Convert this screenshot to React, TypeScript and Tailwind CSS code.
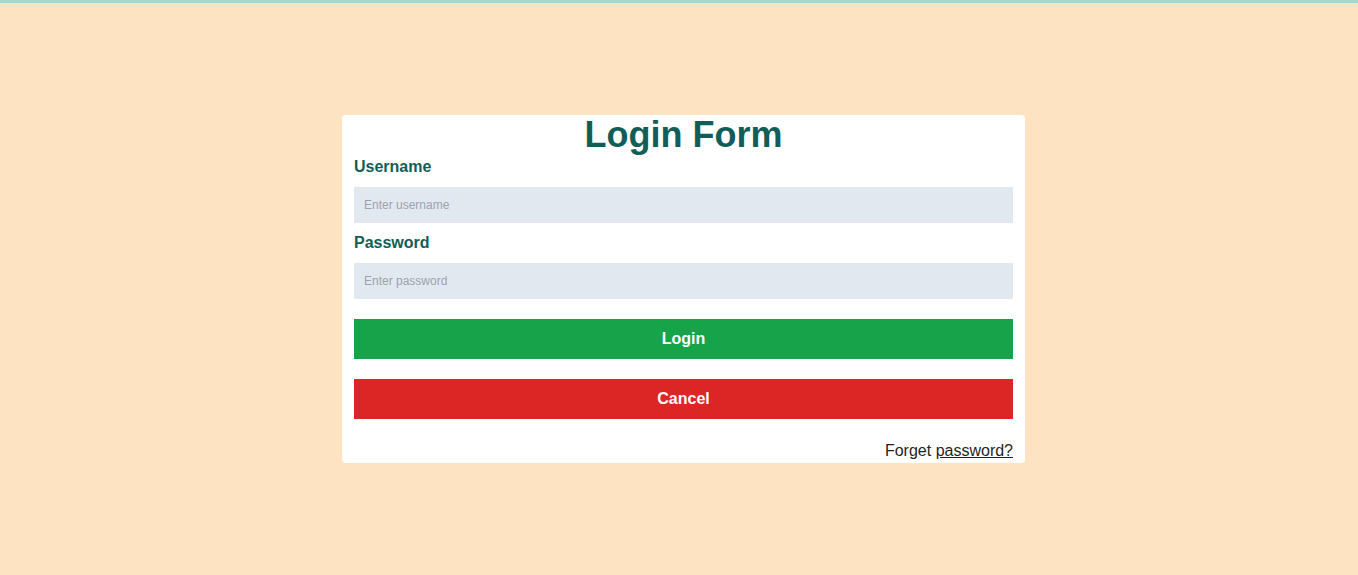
export default function App() {
  return (
    <div
      className="min-h-screen bg-[#fee3c3] border-t-[3px] border-t-[#a9d6d3] flex items-center justify-center pl-[9px]"
      style={{ fontFamily: '"Liberation Sans", Arial, sans-serif' }}
    >
      <div className="w-[683px] rounded bg-white px-3">
        <h1 className="text-center text-4xl leading-10 font-bold text-[#115e59]">Login Form</h1>

        <label className="block text-base leading-6 font-bold text-[#115e59]">Username</label>
        <input
          type="text"
          placeholder="Enter username"
          className="mt-2 block h-9 w-full bg-[#e2e8f0] px-2.5 text-xs text-gray-700 placeholder:text-[#9ca3af] outline-none"
        />

        <label className="mt-2 block text-base leading-6 font-bold text-[#115e59]">Password</label>
        <input
          type="password"
          placeholder="Enter password"
          className="mt-2 block h-9 w-full bg-[#e2e8f0] px-2.5 text-xs text-gray-700 placeholder:text-[#9ca3af] outline-none"
        />

        <button
          type="button"
          className="mt-5 block h-10 w-full bg-[#17a34a] text-base font-bold text-white"
        >
          Login
        </button>
        <button
          type="button"
          className="mt-5 block h-10 w-full bg-[#dc2626] text-base font-bold text-white"
        >
          Cancel
        </button>

        <p className="mt-5 text-right text-base leading-6 text-[#1f1f1f]">
          Forget <a className="underline">password?</a>
        </p>
      </div>
    </div>
  );
}
